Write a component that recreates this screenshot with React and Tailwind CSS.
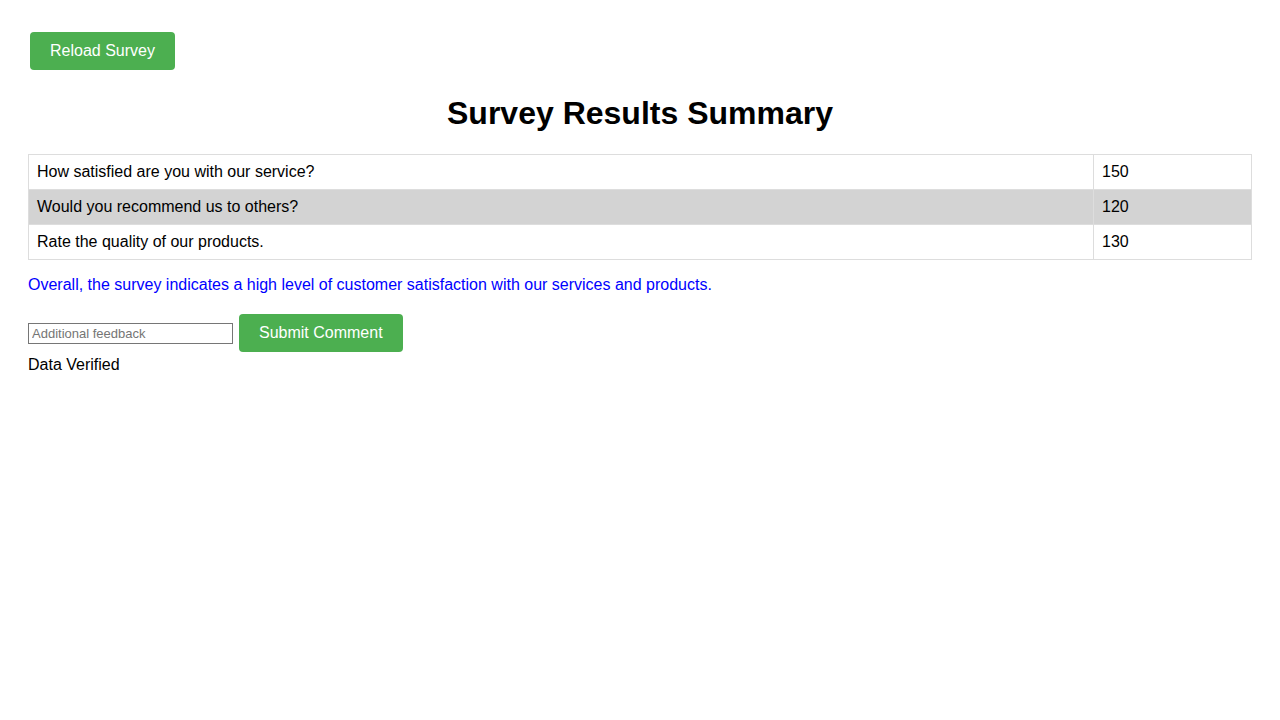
export default function App() {
  const rows = [
    { q: "How satisfied are you with our service?", n: 150 },
    { q: "Would you recommend us to others?", n: 120 },
    { q: "Rate the quality of our products.", n: 130 },
  ];

  return (
    <div className="min-h-screen bg-white px-[28px] pt-[32px] text-black font-['Liberation_Sans',Arial,sans-serif] text-[16px]">
      <button className="ml-[2px] h-[38px] rounded-[4px] bg-[#4caf50] px-[20px] text-[16px] leading-[18px] text-white">
        Reload Survey
      </button>

      <h1 className="mt-[25px] text-center text-[32px] font-bold leading-[37px]">
        Survey Results Summary
      </h1>

      <table className="mt-[22px] w-full border-collapse">
        <tbody>
          {rows.map((r, i) => (
            <tr key={r.q} className={i === 1 ? "bg-[#d3d3d3]" : ""}>
              <td className="h-[35px] border border-[#dddddd] px-[8px] py-0 leading-[18px]">
                {r.q}
              </td>
              <td className="h-[35px] w-[158px] border border-[#dddddd] px-[8px] py-0 leading-[18px]">
                {r.n}
              </td>
            </tr>
          ))}
        </tbody>
      </table>

      <p className="mt-[16px] leading-[18px] text-[#0000ff]">
        Overall, the survey indicates a high level of customer satisfaction with our services and products.
      </p>

      <div className="mt-[20px] flex items-center gap-[6px]">
        <input
          type="text"
          placeholder="Additional feedback"
          className="h-[21px] w-[205px] border border-[#767676] px-[3px] text-[13px] placeholder:text-[#757575]"
        />
        <button className="h-[38px] rounded-[4px] bg-[#4caf50] px-[20px] text-[16px] leading-[18px] text-white">
          Submit Comment
        </button>
      </div>

      <div className="mt-[4px] leading-[18px]">Data Verified</div>
    </div>
  );
}
